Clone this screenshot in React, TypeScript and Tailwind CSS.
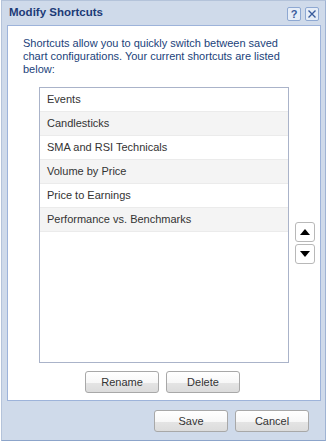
import React from "react";

const shortcuts = [
  "Events",
  "Candlesticks",
  "SMA and RSI Technicals",
  "Volume by Price",
  "Price to Earnings",
  "Performance vs. Benchmarks",
];

const btn =
  "h-[22px] w-[74px] rounded-[3px] border border-[#a8a8a8] bg-[linear-gradient(to_bottom,#ffffff_0%,#f7f7f7_55%,#e4e4e4_56%,#dcdcdc_100%)] text-[11px] text-[#333] leading-[20px]";

export default function App() {
  return (
    <div className="w-[328px] h-[443px] bg-white font-['Liberation_Sans',Arial,sans-serif]">
      <div className="ml-[1px] w-[325px] h-[441px] border border-[#b4c3da] border-b-[#8ca4ca] border-r-[#9fb3d3] bg-[#cfdaea] flex flex-col">
        {/* Title bar */}
        <div className="h-[24px] pl-[7px] pr-[6px] flex items-center justify-between">
          <div className="text-[11.5px] font-bold text-[#1d3b77]">Modify Shortcuts</div>
          <div className="flex gap-[4px] mt-[2px]">
            <div className="w-[14px] h-[14px] rounded-[2px] border border-[#8ea8d2] bg-[#e6edf7] flex items-center justify-center text-[11px] font-bold text-[#3a5c9c] leading-none">
              ?
            </div>
            <div className="w-[14px] h-[14px] rounded-[2px] border border-[#8ea8d2] bg-[#e6edf7] flex items-center justify-center">
              <svg width="10" height="10" viewBox="0 0 10 10">
                <path d="M1.5 1.5 L8.5 8.5 M8.5 1.5 L1.5 8.5" stroke="#3a5c9c" strokeWidth="1.4" />
              </svg>
            </div>
          </div>
        </div>

        {/* Content panel */}
        <div className="ml-[5px] w-[314px] h-[376px] border border-[#9db3da] bg-white pt-[11px] pl-[15px]">
          <p className="text-[11px] leading-[13px] text-[#213f7a] w-[270px]">
            Shortcuts allow you to quickly switch between saved chart configurations. Your current
            shortcuts are listed below:
          </p>

          <div className="flex mt-[11px]">
            <div className="ml-[16px] w-[250px] h-[276px] border border-[#aab3c9] bg-white">
              {shortcuts.map((s, i) => (
                <div
                  key={s}
                  className={
                    "h-[24px] border-b border-[#ebebeb] pl-[7px] flex items-center text-[11px] text-[#333] " +
                    (i % 2 === 1 ? "bg-[#f4f4f4]" : "bg-white")
                  }
                >
                  {s}
                </div>
              ))}
            </div>
            <div className="ml-[6px] mt-[135px] flex flex-col gap-[2px]">
              <div className="w-[20px] h-[20px] rounded-[3px] border border-[#b8b8b8] bg-white flex items-center justify-center">
                <svg width="10" height="6" viewBox="0 0 10 6">
                  <path d="M0 6 L5 0 L10 6 Z" fill="#000" />
                </svg>
              </div>
              <div className="w-[20px] h-[20px] rounded-[3px] border border-[#b8b8b8] bg-white flex items-center justify-center">
                <svg width="10" height="6" viewBox="0 0 10 6">
                  <path d="M0 0 L10 0 L5 6 Z" fill="#000" />
                </svg>
              </div>
            </div>
          </div>

          <div className="pl-[62px] mt-[8px] flex gap-[7px]">
            <button className={btn}>Rename</button>
            <button className={btn}>Delete</button>
          </div>
        </div>

        {/* Footer */}
        <div className="mt-[9px] pr-[16px] flex justify-end gap-[7px]">
          <button className={btn}>Save</button>
          <button className={btn}>Cancel</button>
        </div>
      </div>
    </div>
  );
}
